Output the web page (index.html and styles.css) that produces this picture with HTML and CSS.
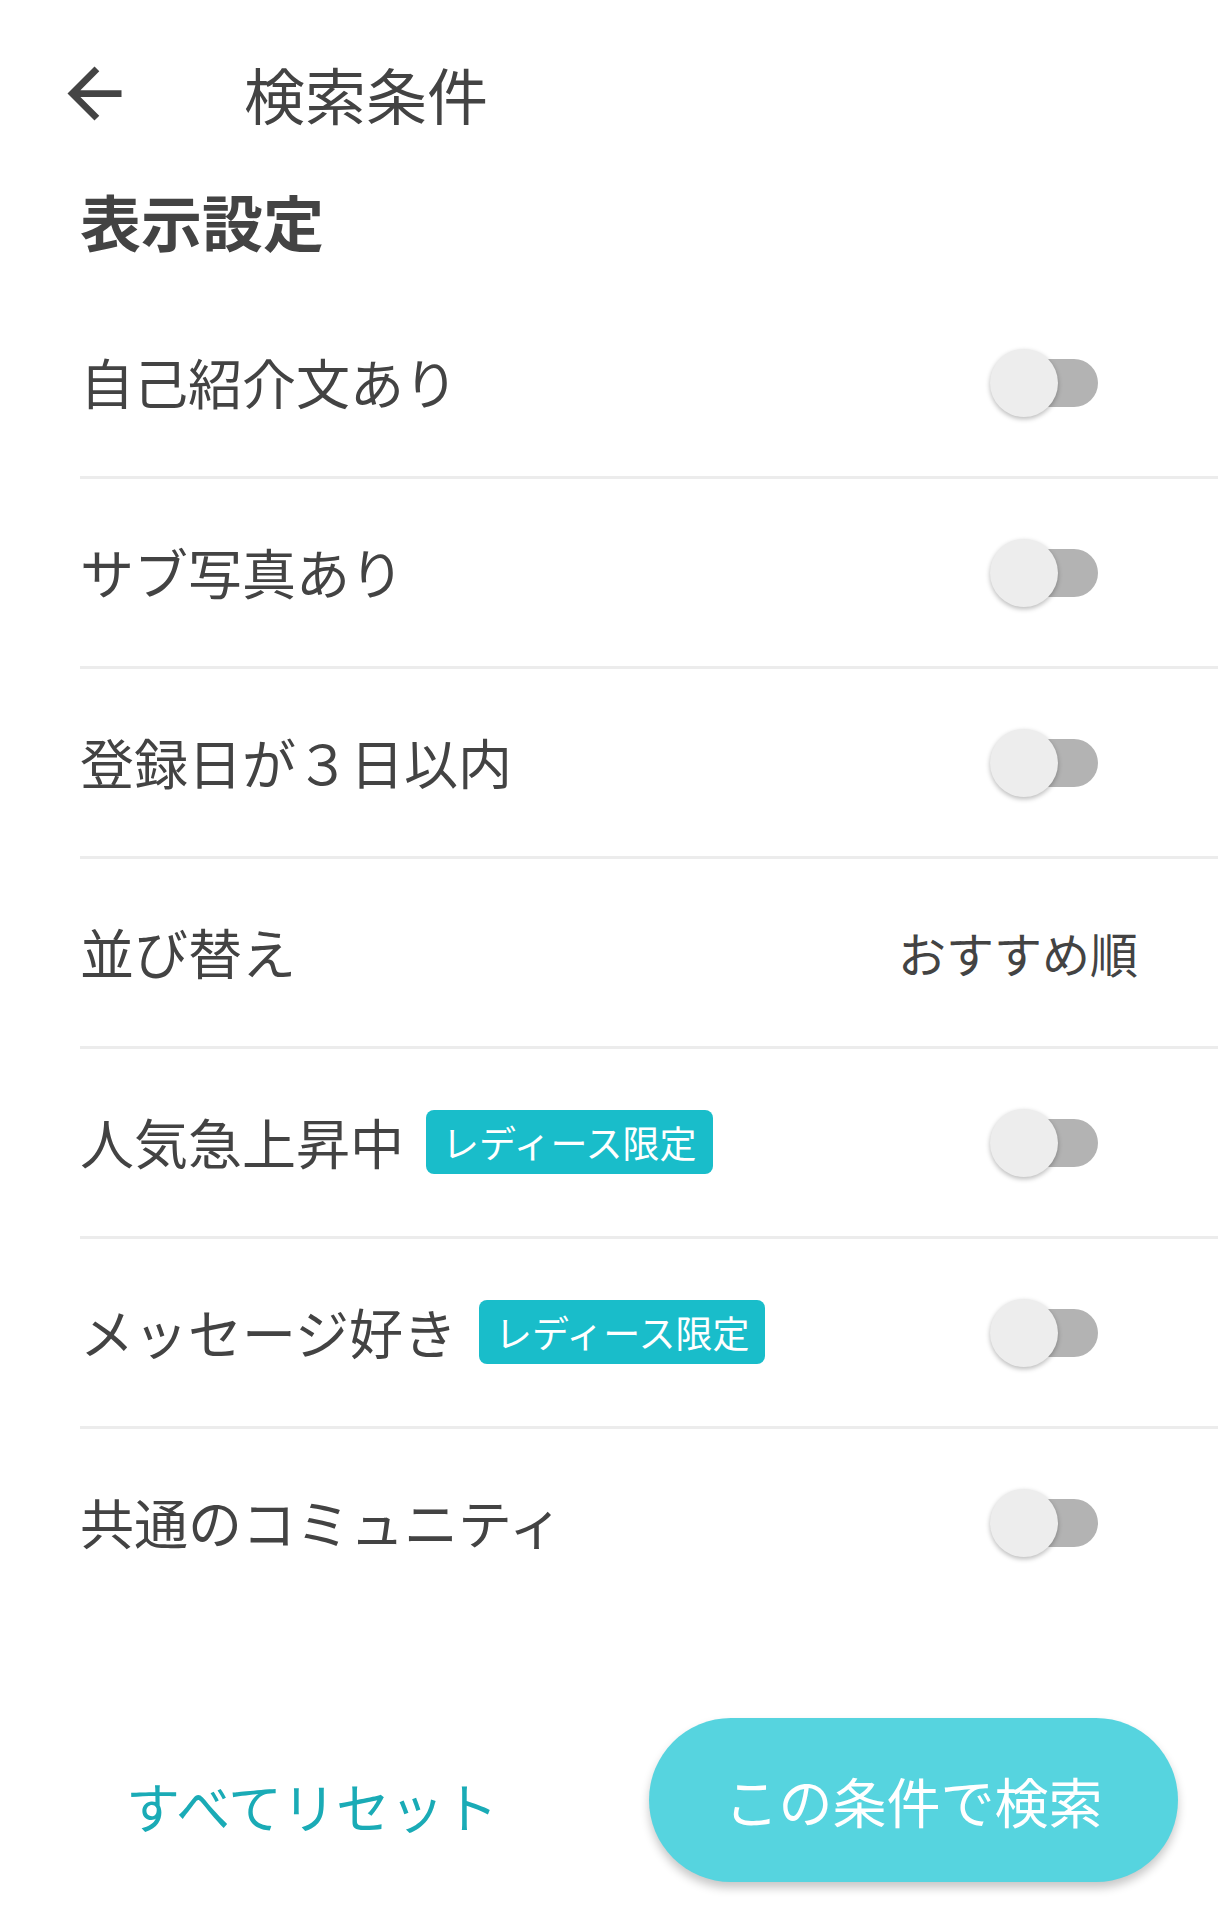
FILE: index.html
```
<!DOCTYPE html>
<html lang="ja">
<head>
<meta charset="utf-8">
<title>検索条件</title>
<link rel="stylesheet" href="styles.css">
</head>
<body>
<div class="screen">
  <header class="appbar">
    <svg class="back" viewBox="0 0 24 24" width="81" height="81"><path fill="#444" d="M20 11H7.83l5.59-5.59L12 4l-8 8 8 8 1.41-1.41L7.83 13H20v-2z"/></svg>
    <h1 class="title">検索条件</h1>
  </header>
  <h2 class="section">表示設定</h2>
  <ul class="list">
    <li class="row"><span class="label">自己紹介文あり</span><span class="switch"><span class="track"></span><span class="thumb"></span></span></li>
    <li class="row"><span class="label">サブ写真あり</span><span class="switch"><span class="track"></span><span class="thumb"></span></span></li>
    <li class="row"><span class="label">登録日が３日以内</span><span class="switch"><span class="track"></span><span class="thumb"></span></span></li>
    <li class="row"><span class="label">並び替え</span><span class="value">おすすめ順</span></li>
    <li class="row"><span class="label">人気急上昇中<span class="badge">レディース限定</span></span><span class="switch"><span class="track"></span><span class="thumb"></span></span></li>
    <li class="row"><span class="label">メッセージ好き<span class="badge">レディース限定</span></span><span class="switch"><span class="track"></span><span class="thumb"></span></span></li>
    <li class="row last"><span class="label">共通のコミュニティ</span><span class="switch"><span class="track"></span><span class="thumb"></span></span></li>
  </ul>
  <footer class="actions">
    <span class="reset">すべてリセット</span>
    <span class="search">この条件で検索</span>
  </footer>
</div>
</body>
</html>
```
FILE: styles.css
```
* { box-sizing: border-box; }
html, body { margin: 0; padding: 0; background: #fff; }
body {
  font-family: "Noto Sans CJK JP", "Noto Sans", sans-serif;
  color: #434343;
}
.screen { width: 1218px; height: 1920px; overflow: hidden; }

.appbar {
  height: 186px;
  display: flex;
  align-items: center;
  padding-left: 54px;
}
.back { display: block; flex: none; }
.title {
  margin: 0 0 0 109px;
  font-size: 61px;
  font-weight: 400;
  line-height: 1;
}

.section {
  margin: 0 0 33px 80px;
  font-size: 61px;
  font-weight: 700;
  line-height: 70px;
  height: 70px;
}

.list { list-style: none; margin: 0; padding: 0; }
.row {
  margin-left: 80px;
  height: 190px;
  padding-right: 80px;
  border-bottom: 3px solid #ececec;
  display: flex;
  align-items: center;
  justify-content: space-between;
}
.row.last { border-bottom: none; height: 187px; }
.label {
  font-size: 54px;
  line-height: 1.2;
  display: flex;
  align-items: center;
}
.value { font-size: 48px; line-height: 1.2; }

.badge {
  margin-left: 22px;
  height: 64px;
  padding: 0 16px;
  border-radius: 8px;
  background: #19bdca;
  color: #fff;
  font-size: 37px;
  line-height: 64px;
}

.switch {
  position: relative;
  width: 108px;
  height: 68px;
  margin-right: 40px;
  flex: none;
}
.track {
  position: absolute;
  left: 6px;
  right: 0;
  top: 10px;
  height: 48px;
  border-radius: 24px;
  background: #b3b3b3;
}
.thumb {
  position: absolute;
  left: 0;
  top: 0;
  width: 68px;
  height: 68px;
  border-radius: 50%;
  background: #ededed;
  box-shadow: 0 2px 5px rgba(0,0,0,0.28);
}

.actions {
  margin-top: 102px;
  display: flex;
  align-items: center;
  justify-content: space-between;
  padding: 0 40px 0 126px;
}
.reset {
  color: #1aabb6;
  font-size: 54px;
  line-height: 1.2;
  margin-top: 12px;
}
.search {
  width: 529px;
  height: 164px;
  border-radius: 82px;
  background: #56d4df;
  color: #fff;
  font-size: 54px;
  display: flex;
  align-items: center;
  justify-content: center;
  box-shadow: 0 6px 10px rgba(0,0,0,0.22);
}
```
